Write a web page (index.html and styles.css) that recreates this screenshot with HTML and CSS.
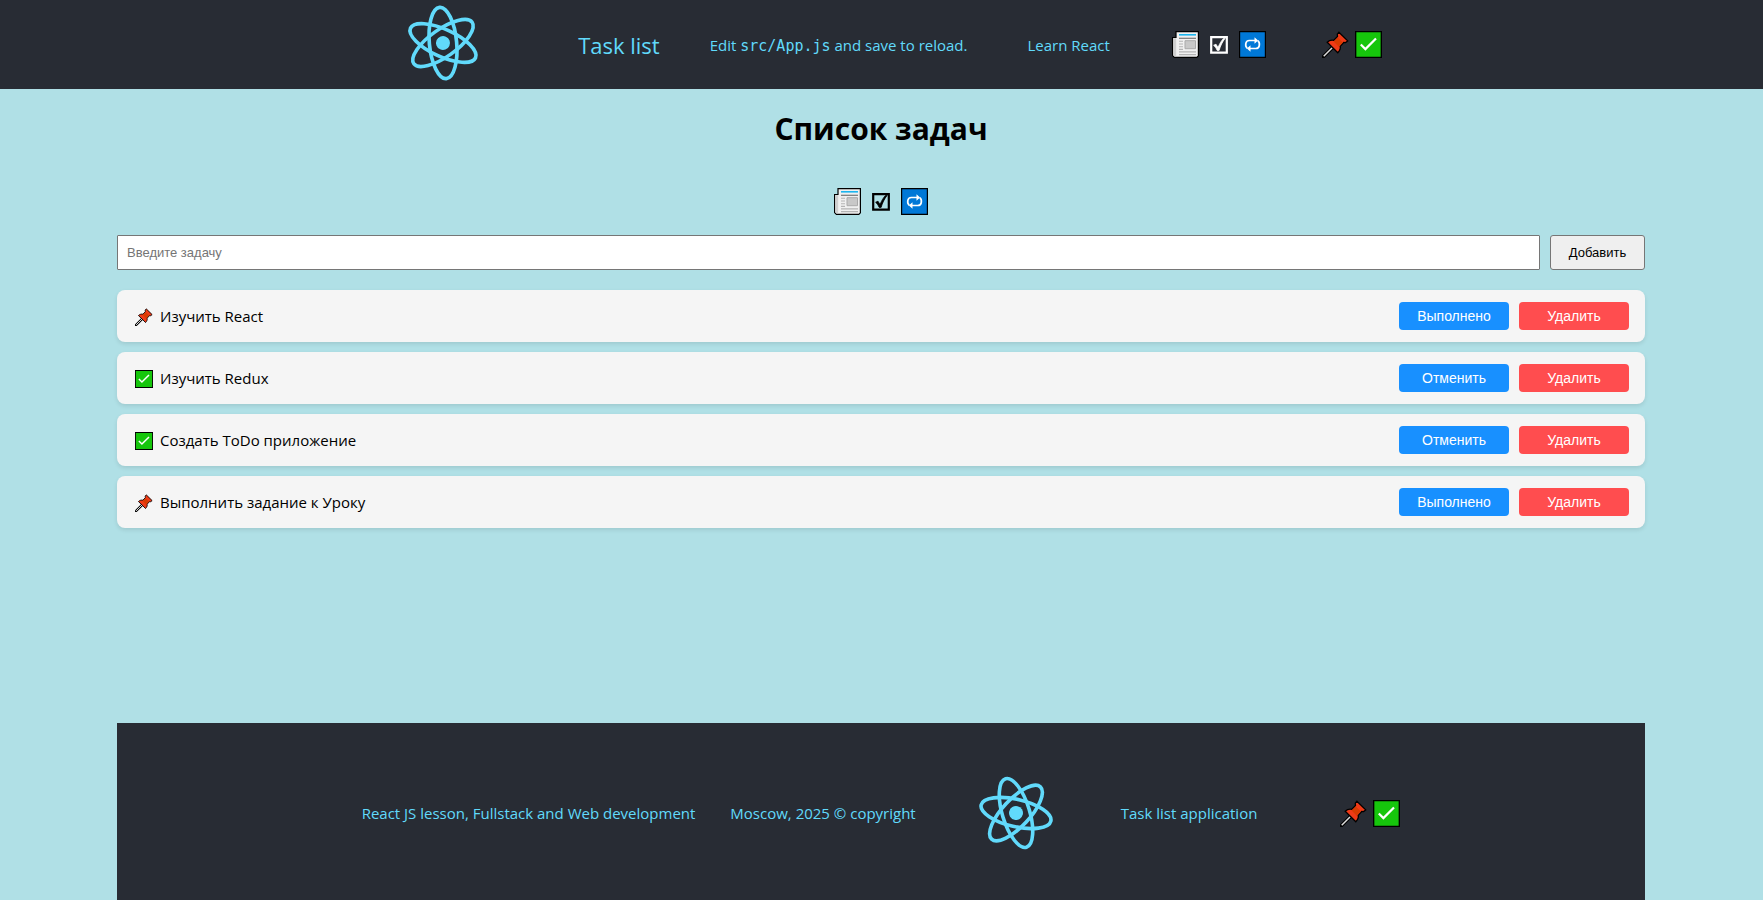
FILE: index.html
```html
<!DOCTYPE html>
<html lang="ru">
<head>
<meta charset="utf-8">
<title>Task list</title>
<link rel="stylesheet" href="styles.css">
</head>
<body>
<svg class="sprite" aria-hidden="true">
  <symbol id="atom" viewBox="-12 -12 24 24">
    <circle r="2.150" fill="#61dafb"/>
    <g fill="none" stroke="#61dafb" stroke-width="1.120">
      <ellipse rx="11" ry="4.2"/>
      <ellipse rx="11" ry="4.2" transform="rotate(60)"/>
      <ellipse rx="11" ry="4.2" transform="rotate(120)"/>
    </g>
  </symbol>
  <symbol id="news" viewBox="0 0 27 27">
    <path d="M.6 6.500H4V.6h22.400v24.200l-1.600 1.600H2.400L.6 24.600z" fill="#f0f0f0" stroke="#000" stroke-width="1.200"/>
    <path d="M1.400 7.300H4.200V24.500L3 25.600L1.400 24.200z" fill="#cfcfcf"/>
    <path d="M7 3.800h17" stroke="#1cb5ee" stroke-width="1.600"/>
    <path d="M7 7.300h17" stroke="#767676" stroke-width="1.200"/>
    <path d="M7 10.300h4M7 13h4M7 15.700h4M7 18.400h4M7 20.900h17M7 23.600h17" stroke="#b4b4b4" stroke-width="1.100"/>
    <path d="M13 9.700h10.500v8H13z" fill="#c8c8c8" stroke="#aaa"/>
  </symbol>
  <symbol id="box" viewBox="0 0 18 18">
    <path d="M1.200 1.200h15.600v15.400H1.200z" fill="none" stroke="currentColor" stroke-width="2.200"/>
    <path d="M3.600 9.300L6 8.200l2 3.400C9.600 7.600 11.400 4.600 13.600 2.400h1.500C12.300 6 10.400 9.800 9.100 14.400H7.200C6.200 12.200 5 10.400 3.600 9.300z" fill="currentColor" stroke="currentColor" stroke-width=".8"/>
  </symbol>
  <symbol id="repeat" viewBox="0 0 27 27">
    <path d="M.5.500h26v26H.5z" fill="#0078d7" stroke="#000" stroke-width="1.400"/>
    <g fill="none" stroke="#fff" stroke-width="1.700">
      <path d="M8.300 17.200C5.900 15.500 6 9.500 10.300 9.500H17"/>
      <path d="M18.800 9.800c2.400 1.700 2.300 7.700-2 7.700H10.500"/>
    </g>
    <path d="M15.500 6.300l3.600 3.200-3.600 3.200zM11.500 14.300L7.900 17.500l3.600 3.200z" fill="#fff"/>
  </symbol>
  <symbol id="pin" viewBox="0 0 27 27">
    <path d="M1.500 25.500L11 16" stroke="#000" stroke-width="3.600" stroke-linecap="square"/>
    <path d="M1.700 25.300L11 16" stroke="#ddd" stroke-width="1.500"/>
    <path d="M16.900 1.300L25.700 9.900L23.600 11.600L21.700 11.500L18.200 15.300C18.900 17.800 17.500 20 15.800 21.800L5.200 11.300C7 9.500 9.500 8.700 11.800 9.300L15.500 5.500L15.300 3.200z" fill="#f03a17" stroke="#000" stroke-width="1.300"/>
    <path d="M15.900 6.500l5 4.900-4.100 4.400-5.200-5.300z" fill="#d83b01"/>
  </symbol>
  <symbol id="done" viewBox="0 0 27 27">
    <path d="M.5.500h26v26H.5z" fill="#16c60c" stroke="#000" stroke-width="1.700"/>
    <path d="M5.800 13.500l4.600 4.600L21 7.400" fill="none" stroke="#fff" stroke-width="2.200"/>
  </symbol>
</svg>

<header class="header">
  <svg class="logo logo-top" viewBox="0 0 113 80" role="img" aria-label="React"><use href="#atom" x="17" y="1" width="78" height="78" transform="rotate(24.600 56 40)"/></svg>
  <span class="brand">Task list</span>
  <span class="hint">Edit <code>src/App.js</code> and save to reload.</span>
  <a class="learn" href="#">Learn React</a>
  <span class="icons icons-nav">
    <svg class="icon"><use href="#news"/></svg>
    <svg class="icon-box"><use href="#box"/></svg>
    <svg class="icon"><use href="#repeat"/></svg>
  </span>
  <span class="status">
    <svg class="icon"><use href="#pin"/></svg>
    <svg class="icon"><use href="#done"/></svg>
  </span>
</header>

<main class="main">
  <h1 class="title">Список задач</h1>
  <div class="icons">
    <svg class="icon"><use href="#news"/></svg>
    <svg class="icon-box"><use href="#box"/></svg>
    <svg class="icon"><use href="#repeat"/></svg>
  </div>
  <form class="form">
    <input class="field" type="text" placeholder="Введите задачу" aria-label="Введите задачу">
    <button class="add" type="button">Добавить</button>
  </form>
  <ul class="list">
    <li class="task"><svg class="mark"><use href="#pin"/></svg><span class="text">Изучить React</span><button class="btn" type="button">Выполнено</button><button class="btn btn-delete" type="button">Удалить</button></li>
    <li class="task"><svg class="mark"><use href="#done"/></svg><span class="text">Изучить Redux</span><button class="btn" type="button">Отменить</button><button class="btn btn-delete" type="button">Удалить</button></li>
    <li class="task"><svg class="mark"><use href="#done"/></svg><span class="text">Создать ToDo приложение</span><button class="btn" type="button">Отменить</button><button class="btn btn-delete" type="button">Удалить</button></li>
    <li class="task"><svg class="mark"><use href="#pin"/></svg><span class="text">Выполнить задание к Уроку</span><button class="btn" type="button">Выполнено</button><button class="btn btn-delete" type="button">Удалить</button></li>
  </ul>
  <footer class="footer">
    <span>React JS lesson, Fullstack and Web development</span>
    <span class="copyright">Moscow, 2025 © copyright</span>
    <svg class="logo logo-bottom" viewBox="0 0 113 80" role="img" aria-label="React"><use href="#atom" x="17" y="1" width="78" height="78" transform="rotate(13 56 40)"/></svg>
    <span class="app-name">Task list application</span>
    <span class="status">
      <svg class="icon"><use href="#pin"/></svg>
      <svg class="icon"><use href="#done"/></svg>
    </span>
  </footer>
</main>
</body>
</html>
```
FILE: styles.css
```css
* {
  box-sizing: border-box;
}

body {
  display: flex;
  flex-direction: column;
  min-height: 100vh;
  margin: 0;
  background: #b0e0e6;
  color: #000;
  font: 15px/22px "Open Sans", "Noto Sans", sans-serif;
}

.sprite {
  position: absolute;
  width: 0;
  height: 0;
}

.header,
.footer {
  display: flex;
  align-items: center;
  justify-content: center;
  background: #282c34;
  color: #61dafb;
  white-space: nowrap;
}

.header {
  height: 89px;
  padding-left: 6px;
}

.logo {
  flex: none;
  width: 113px;
  height: 80px;
}

.logo-top {
  margin-bottom: 3px;
}

.brand {
  margin-left: 78px;
  font-size: 22px;
}

.hint {
  margin-left: 50px;
}

.hint code {
  font-family: "DejaVu Sans Mono", monospace;
  font-size: 15px;
  line-height: 1;
}

.learn {
  margin-left: 60px;
  color: inherit;
  text-decoration: none;
}

.icons {
  display: flex;
  align-items: center;
  justify-content: center;
  gap: 11px;
}

.icons-nav {
  margin-left: 62px;
  color: #fff;
}

.icon {
  flex: none;
  width: 27px;
  height: 27px;
}

.icon-box {
  flex: none;
  width: 18px;
  height: 18px;
}

.status {
  display: flex;
  gap: 6px;
  margin-left: 56px;
}

.main {
  display: flex;
  flex: 1;
  flex-direction: column;
  padding: 0 118px 0 117px;
}

.title {
  margin: 18px 0 38px;
  font-size: 30px;
  line-height: 43px;
  text-align: center;
}

.form {
  display: flex;
  gap: 10px;
  margin-top: 20px;
}

.field,
.add {
  height: 35px;
  border: 1px solid #767676;
  font: 13px "Liberation Sans", Arial, sans-serif;
}

.field {
  flex: 1;
  padding: 0 9px;
  border-radius: 1px;
  background: #fff;
}

.field::placeholder {
  color: #757575;
}

.add {
  width: 95px;
  border-radius: 3px;
  background: #efefef;
  color: #000;
}

.list {
  display: flex;
  flex-direction: column;
  gap: 10px;
  margin: 20px 0;
  padding: 0;
  list-style: none;
}

.task {
  display: flex;
  align-items: center;
  gap: 10px;
  padding: 12px 16px 12px 18px;
  border-radius: 8px;
  background: #f5f5f5;
  box-shadow: 0 2px 4px rgba(0, 0, 0, 0.1);
}

.mark {
  flex: none;
  width: 18px;
  height: 18px;
  margin: 2px -3px 0 0;
}

.text {
  flex: 1;
}

.btn {
  width: 110px;
  height: 28px;
  padding: 0;
  border: 0;
  border-radius: 4px;
  background: #1890ff;
  color: #fff;
  font: 14px "Liberation Sans", Arial, sans-serif;
}

.btn-delete {
  background: #ff4d4f;
}

.footer {
  margin-top: auto;
  padding: 50px 0 47px;
}

.copyright {
  margin-left: 35px;
}

.logo-bottom {
  margin-left: 44px;
}

.app-name {
  margin-left: 48px;
}

.footer .status {
  margin-left: 83px;
}
```
